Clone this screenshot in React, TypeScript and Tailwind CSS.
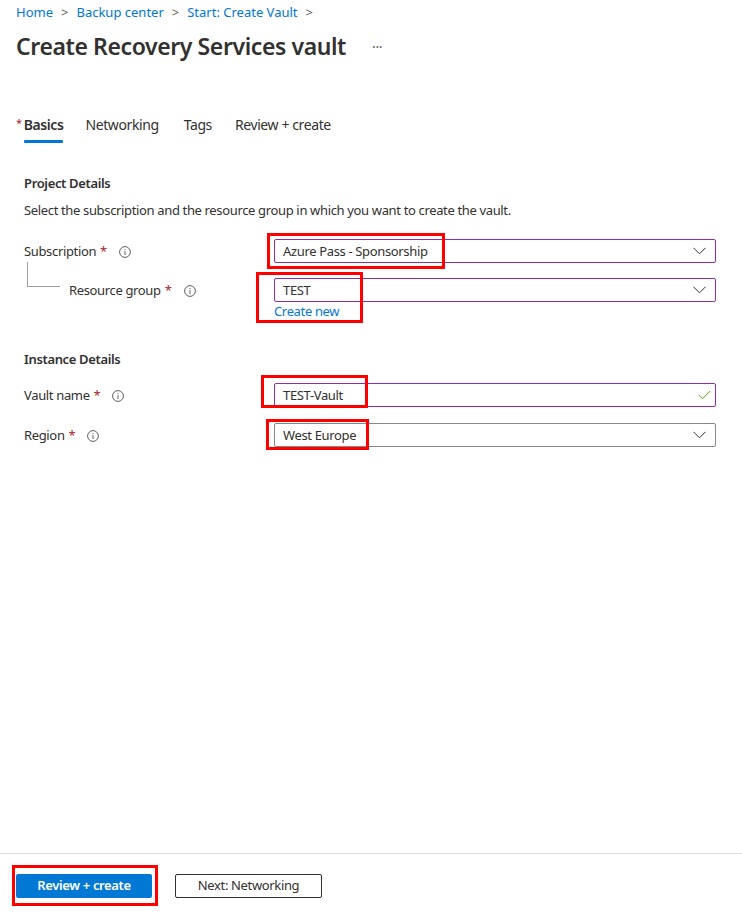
import React from "react";

const font = { fontFamily: '"Segoe UI", "Noto Sans", "Liberation Sans", sans-serif' };

function Chevron() {
  return (
    <svg width="13" height="8" viewBox="0 0 13 8" className="shrink-0">
      <path d="M0.5 0.8 L6.5 6.8 L12.5 0.8" fill="none" stroke="#323130" strokeWidth="1" />
    </svg>
  );
}

function Info() {
  return (
    <svg width="12" height="12" viewBox="0 0 12 12" className="shrink-0">
      <circle cx="6" cy="6" r="5.4" fill="none" stroke="#605e5c" strokeWidth="1" />
      <rect x="5.5" y="5" width="1" height="4" fill="#605e5c" />
      <rect x="5.5" y="3" width="1" height="1" fill="#605e5c" />
    </svg>
  );
}

function Label({ text }: { text: string }) {
  return (
    <div className="flex items-center pt-[1px]">
      <span>{text}</span>
      <span className="ml-[4px] text-[#a4262c]">*</span>
      <span className="ml-[12px]">
        <Info />
      </span>
    </div>
  );
}

function Select({ value, purple }: { value: string; purple?: boolean }) {
  return (
    <div
      className={
        "flex h-[24px] w-[442px] items-center justify-between rounded-[2px] border pl-[8px] pr-[9px] " +
        (purple ? "border-[#8e2eab]" : "border-[#8a8886]")
      }
    >
      <span className="pt-[1px]">{value}</span>
      <Chevron />
    </div>
  );
}

export default function App() {
  return (
    <div
      className="relative flex h-[922px] w-[742px] flex-col bg-white text-[13px] tracking-[-0.35px] text-[#323130]"
      style={font}
    >
      {/* breadcrumb */}
      <div className="flex h-[26px] items-center pl-[16px] tracking-normal text-[#0078d4]">
        <span>Home</span>
        <span className="mx-[8px] text-[#605e5c]">&gt;</span>
        <span>Backup center</span>
        <span className="mx-[8px] text-[#605e5c]">&gt;</span>
        <span>Start: Create Vault</span>
        <span className="mx-[8px] text-[#605e5c]">&gt;</span>
      </div>

      {/* title */}
      <div className="flex h-[40px] items-center pl-[16px]">
        <h1 className="text-[23px] font-semibold tracking-[-0.4px]">Create Recovery Services vault</h1>
        <span className="ml-[26px] text-[14px] text-[#605e5c]">···</span>
      </div>

      {/* tabs */}
      <div className="mt-[40px] flex pl-[16px] text-[14px] tracking-[-0.4px]">
        <div className="flex">
          <span className="mr-[2px] pt-[9px] text-[11px] text-[#a4262c]">*</span>
          <div className="flex flex-col">
            <span className="pt-[9px] leading-[20px] font-semibold">Basics</span>
            <span className="mt-[5px] h-[3px] rounded-[1px] bg-[#0078d4]" />
          </div>
        </div>
        <span className="ml-[22px] pt-[9px] leading-[20px]">Networking</span>
        <span className="ml-[25px] pt-[9px] leading-[20px]">Tags</span>
        <span className="ml-[23px] pt-[9px] leading-[20px]">Review + create</span>
      </div>

      {/* form */}
      <div className="flex flex-col pl-[24px]">
        <h2 className="mt-[30px] leading-[20px] font-semibold">Project Details</h2>
        <p className="mt-[7px] leading-[20px]">
          Select the subscription and the resource group in which you want to create the vault.
        </p>

        <div className="mt-[19px] flex items-center">
          <div className="w-[250px]">
            <Label text="Subscription" />
          </div>
          <Select value="Azure Pass - Sponsorship" purple />
        </div>

        <div className="relative mt-[15px] flex items-start">
          <div className="absolute left-[3px] top-[-16px] h-[25px] w-[33px] border-b border-l border-[#a19f9d]" />
          <div className="flex h-[24px] w-[250px] items-center pl-[45px]">
            <Label text="Resource group" />
          </div>
          <div className="flex flex-col">
            <Select value="TEST" purple />
            <span className="leading-[18px] text-[#0078d4]">Create new</span>
          </div>
        </div>

        <h2 className="mt-[29px] leading-[20px] font-semibold">Instance Details</h2>

        <div className="mt-[14px] flex items-center">
          <div className="w-[250px]">
            <Label text="Vault name" />
          </div>
          <div className="flex h-[24px] w-[442px] items-center justify-between rounded-[2px] border border-[#8e2eab] pl-[8px] pr-[4px]">
            <span className="pt-[1px]">TEST-Vault</span>
            <svg width="13" height="10" viewBox="0 0 13 10">
              <path d="M0.8 5 L4.5 8.7 L12.2 1" fill="none" stroke="#57a300" strokeWidth="1" />
            </svg>
          </div>
        </div>

        <div className="mt-[16px] flex items-center">
          <div className="w-[250px]">
            <Label text="Region" />
          </div>
          <Select value="West Europe" />
        </div>
      </div>

      <div className="flex-1" />

      {/* footer */}
      <div className="flex items-center gap-[23px] border-t border-[#e1dfdd] pb-[24px] pl-[16px] pt-[20px]">
        <button className="h-[24px] w-[136px] rounded-[2px] bg-[#0078d4] text-[13px] font-semibold text-white">
          Review + create
        </button>
        <button className="h-[24px] w-[147px] rounded-[2px] border border-[#323130] bg-white text-[13px] text-[#323130]">
          Next: Networking
        </button>
      </div>

      {/* red annotation boxes */}
      <div className="pointer-events-none absolute left-[267px] top-[233px] h-[36px] w-[178px] border-[3px] border-[#ff0000]" />
      <div className="pointer-events-none absolute left-[256px] top-[272px] h-[51px] w-[107px] border-[3px] border-[#ff0000]" />
      <div className="pointer-events-none absolute left-[261px] top-[375px] h-[33px] w-[107px] border-[3px] border-[#ff0000]" />
      <div className="pointer-events-none absolute left-[266px] top-[419px] h-[31px] w-[103px] border-[3px] border-[#ff0000]" />
      <div className="pointer-events-none absolute left-[12px] top-[865px] h-[41px] w-[146px] border-[3px] border-[#ff0000]" />
    </div>
  );
}
